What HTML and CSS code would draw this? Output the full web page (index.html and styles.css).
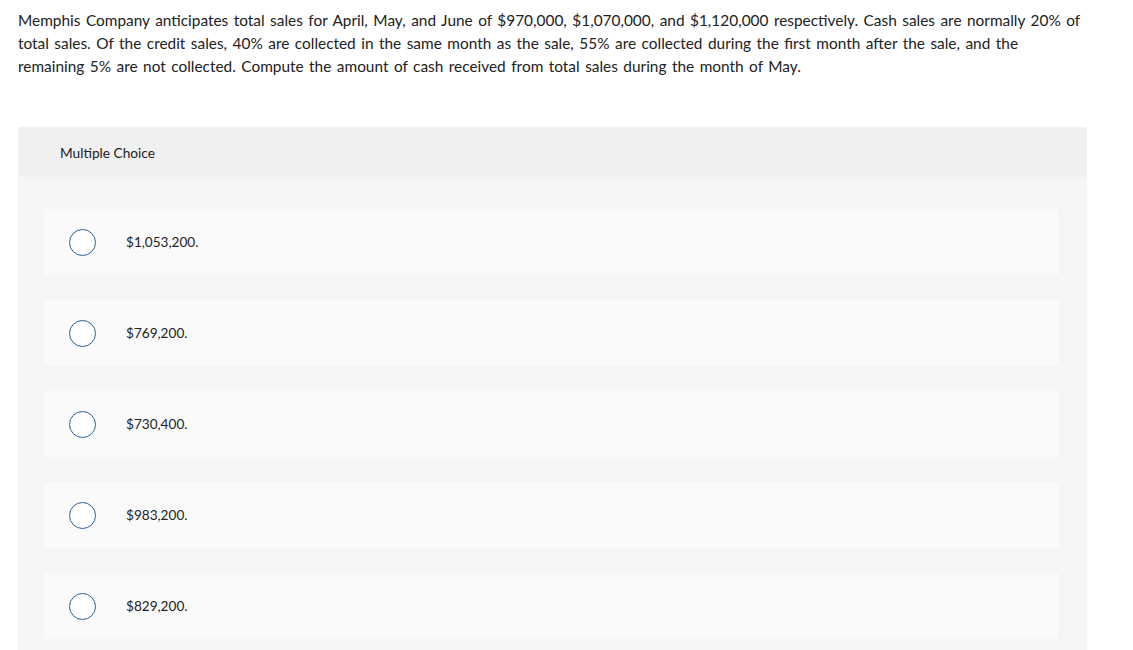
FILE: index.html
```html
<!DOCTYPE html>
<html>
<head>
<meta charset="utf-8">
<link rel="stylesheet" href="styles.css">
</head>
<body>
<div class="page">
  <p class="question">Memphis Company anticipates total sales for April, May, and June of $970,000, $1,070,000, and $1,120,000 respectively. Cash sales are normally 20% of total sales. Of the credit sales, 40% are collected in the same month as the sale, 55% are collected during the first month after the sale, and the remaining 5% are not collected. Compute the amount of cash received from total sales during the month of May.</p>
  <div class="panel">
    <div class="panel-head">Multiple Choice</div>
    <div class="panel-body">
      <label class="option"><span class="radio"></span><span class="opt-text">$1,053,200.</span></label>
      <label class="option"><span class="radio"></span><span class="opt-text">$769,200.</span></label>
      <label class="option"><span class="radio"></span><span class="opt-text">$730,400.</span></label>
      <label class="option"><span class="radio"></span><span class="opt-text">$983,200.</span></label>
      <label class="option"><span class="radio"></span><span class="opt-text">$829,200.</span></label>
    </div>
  </div>
</div>
</body>
</html>
```

FILE: styles.css
```css
html, body {
  margin: 0;
  padding: 0;
  background: #ffffff;
}
body {
  font-family: "Lato", "Open Sans", sans-serif;
  color: #222;
}
.page {
  padding: 9px 18px 0 18px;
  width: 1069px;
}
.question {
  margin: 0;
  font-size: 15.4px;
  word-spacing: 1.55px;
  line-height: 23px;
  color: #222;
}
.panel {
  margin-top: 49px;
  border-radius: 3px;
  overflow: hidden;
  background: #f5f5f5;
}
.panel-head {
  height: 50px;
  background: #f0f0f0;
  display: flex;
  align-items: center;
  padding-left: 42px;
  font-size: 13.7px;
  color: #222;
}
.panel-body {
  padding: 32px 28px 20px 26px;
  display: flex;
  flex-direction: column;
  gap: 25px;
}
.option {
  height: 66px;
  background: #fafafa;
  border-radius: 3px;
  display: flex;
  align-items: center;
  padding-left: 25px;
}
.radio {
  width: 25px;
  height: 25px;
  border: 1.5px solid #2b5e94;
  border-radius: 50%;
  background: #fff;
  flex: none;
}
.opt-text {
  margin-left: 30px;
  font-size: 13.6px;
  color: #222;
}
```
